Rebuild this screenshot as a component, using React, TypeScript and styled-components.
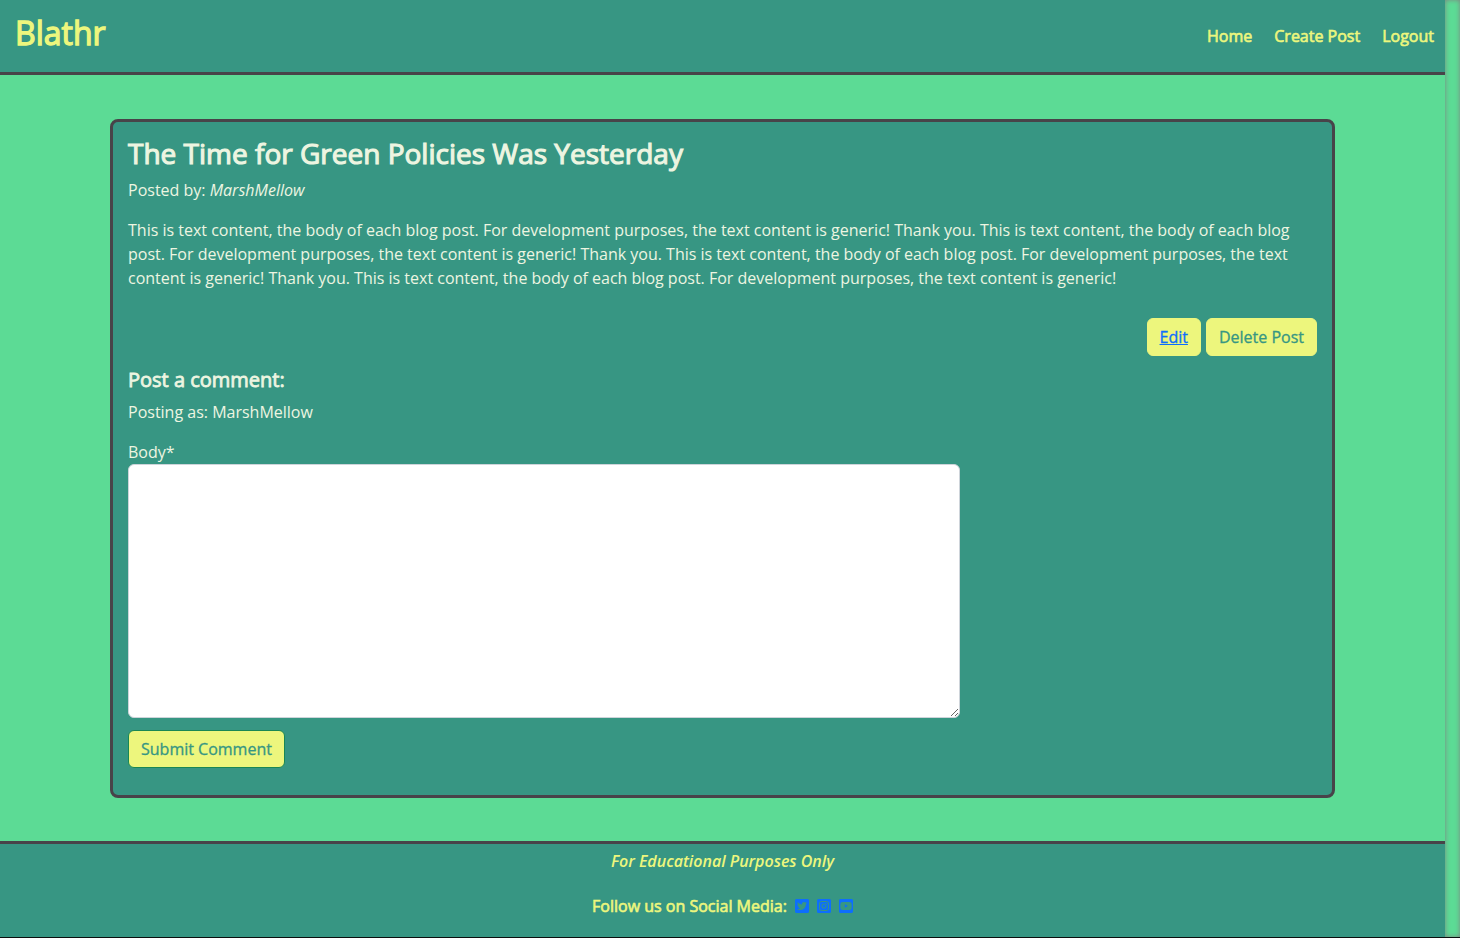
import React from 'react';
import styled, { createGlobalStyle } from 'styled-components';
import { FaTwitterSquare, FaInstagramSquare, FaYoutubeSquare } from 'react-icons/fa';

const color = {
  teal: '#379683',
  green: '#5cdb95',
  yellow: '#edf67d',
  cream: '#edf5e1',
  line: '#484349',
  link: '#0d6efd',
  success: '#198754',
};

const GlobalStyle = createGlobalStyle`
  *, *::before, *::after { box-sizing: border-box; }
  body {
    margin: 0;
    background: ${color.green};
    color: ${color.cream};
    font: 400 16px/24px 'Open Sans', sans-serif;
  }
  h1, h2, h3, p { margin: 0; font-weight: 400; }
`;

const Shell = styled.div`
  display: flex;
  min-height: 100vh;
  border-bottom: 1px solid #0b0f0f;
`;

const Page = styled.div`
  flex: 1;
  min-width: 0;
  display: flex;
  flex-direction: column;
`;

const ScrollTrack = styled.div`
  flex: 0 0 15px;
  box-shadow: inset 0 0 5px grey;
`;

const Header = styled.header`
  display: flex;
  justify-content: space-between;
  align-items: center;
  height: 75px;
  padding: 0 11px 0 15px;
  background: ${color.teal};
  border-bottom: 3px solid ${color.line};
  color: ${color.yellow};
`;

const Brand = styled.h1`
  padding-bottom: 6px;
  font-size: 32px;
  line-height: 40px;
  -webkit-text-stroke: 0.04em;
`;

const Nav = styled.nav`
  display: flex;
  gap: 22px;
`;

const NavLink = styled.a`
  color: inherit;
  text-decoration: none;
  -webkit-text-stroke: 0.04em;
`;

const Main = styled.main`
  flex: 1;
  padding: 44px 110px 43px;
`;

const Card = styled.article`
  padding: 15px 15px 27px;
  background: ${color.teal};
  border: 3px solid ${color.line};
  border-radius: 8px;
`;

const PostTitle = styled.h2`
  margin-bottom: 9px;
  font-size: 28px;
  line-height: 32px;
  -webkit-text-stroke: 0.04em;
`;

const SectionTitle = styled.h3`
  margin: 12px 0 8px;
  font-size: 20px;
  line-height: 24px;
  -webkit-text-stroke: 0.04em;
`;

const Text = styled.p`
  margin-bottom: 16px;
`;

const Actions = styled.div`
  display: flex;
  justify-content: flex-end;
  gap: 5px;
  margin-top: 28px;
`;

const Button = styled.button<{ $outlined?: boolean; $linked?: boolean }>`
  padding: 6px 12px;
  border: 1px solid ${(p) => (p.$outlined ? color.success : color.yellow)};
  border-radius: 6px;
  background: ${color.yellow};
  color: ${(p) => (p.$linked ? color.link : color.teal)};
  font: inherit;
  text-decoration: ${(p) => (p.$linked ? 'underline' : 'none')};
  -webkit-text-stroke: 0.02em;
  cursor: pointer;
`;

const Form = styled.form`
  display: flex;
  flex-direction: column;
  align-items: flex-start;
`;

const CommentBox = styled.textarea`
  width: 70%;
  height: 254px;
  margin-bottom: 12px;
  padding: 6px 12px;
  border: 1px solid #ced4da;
  border-radius: 6px;
  background: #fff;
  font: inherit;
  resize: vertical;
`;

const Footer = styled.footer`
  display: flex;
  flex-direction: column;
  align-items: center;
  gap: 21px;
  padding: 5px 0 19px;
  background: ${color.teal};
  border-top: 3px solid ${color.line};
  color: ${color.yellow};
`;

const Notice = styled.em`
  font-weight: 600;
`;

const SocialLabel = styled.p`
  -webkit-text-stroke: 0.04em;
`;

const Social = styled.div`
  display: flex;
  align-items: center;
  gap: 8px;
`;

const SocialLink = styled.a`
  display: flex;
  color: ${color.link};

  svg {
    width: 14px;
    height: 16px;
  }
`;

const App = () => (
  <>
    <GlobalStyle />
    <Shell>
      <Page>
        <Header>
          <Brand>Blathr</Brand>
          <Nav>
            <NavLink href="#home">Home</NavLink>
            <NavLink href="#create">Create Post</NavLink>
            <NavLink href="#logout">Logout</NavLink>
          </Nav>
        </Header>
        <Main>
          <Card>
            <PostTitle>The Time for Green Policies Was Yesterday</PostTitle>
            <Text>
              Posted by: <em>MarshMellow</em>
            </Text>
            <Text>
              This is text content, the body of each blog post. For development purposes, the text
              content is generic! Thank you. This is text content, the body of each blog post. For
              development purposes, the text content is generic! Thank you. This is text content,
              the body of each blog post. For development purposes, the text content is generic!
              Thank you. This is text content, the body of each blog post. For development
              purposes, the text content is generic!
            </Text>
            <Actions>
              <Button as="a" href="#edit" $linked>
                Edit
              </Button>
              <Button type="button">Delete Post</Button>
            </Actions>
            <SectionTitle>Post a comment:</SectionTitle>
            <Text>Posting as: MarshMellow</Text>
            <Form onSubmit={(e: React.FormEvent) => e.preventDefault()}>
              <label htmlFor="comment-body">Body*</label>
              <CommentBox id="comment-body" required />
              <Button type="submit" $outlined>
                Submit Comment
              </Button>
            </Form>
          </Card>
        </Main>
        <Footer>
          <Notice>For Educational Purposes Only</Notice>
          <Social>
            <SocialLabel>Follow us on Social Media:</SocialLabel>
            <SocialLink href="#twitter" aria-label="Twitter">
              <FaTwitterSquare />
            </SocialLink>
            <SocialLink href="#instagram" aria-label="Instagram">
              <FaInstagramSquare />
            </SocialLink>
            <SocialLink href="#youtube" aria-label="YouTube">
              <FaYoutubeSquare />
            </SocialLink>
          </Social>
        </Footer>
      </Page>
      <ScrollTrack />
    </Shell>
  </>
);

export default App;
